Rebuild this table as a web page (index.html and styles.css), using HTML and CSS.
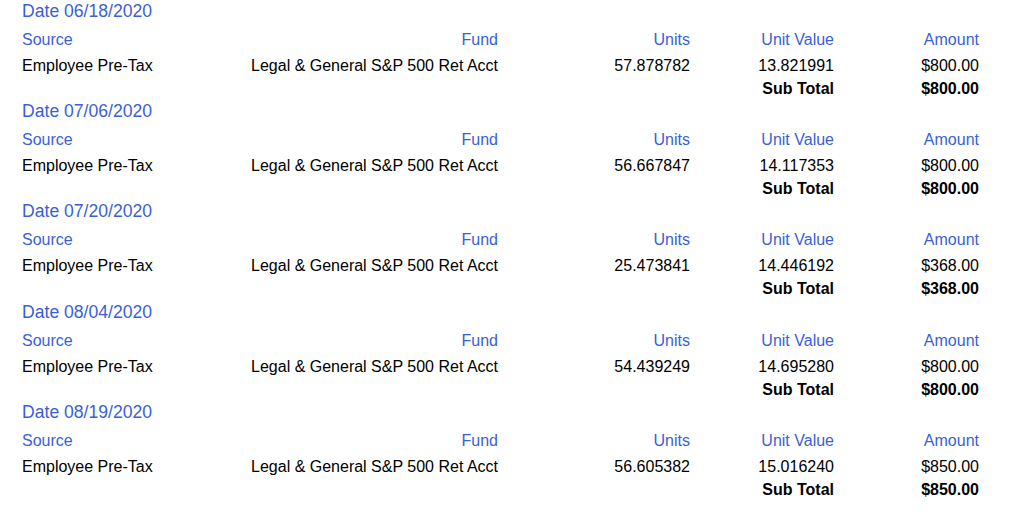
FILE: index.html
```html
<!DOCTYPE html>
<html lang="en">
<head>
<meta charset="utf-8">
<title>Transactions</title>
<link rel="stylesheet" href="styles.css">
</head>
<body>
<div class="list">
  <section class="block">
    <div class="date">Date 06/18/2020</div>
    <div class="grid">
      <div class="hd">Source</div><div class="hd r">Fund</div><div class="hd r">Units</div><div class="hd r">Unit Value</div><div class="hd r">Amount</div>
      <div class="cell">Employee Pre-Tax</div><div class="cell r">Legal &amp; General S&amp;P 500 Ret Acct</div><div class="cell r">57.878782</div><div class="cell r">13.821991</div><div class="cell r">$800.00</div>
      <div class="sub"></div><div class="sub"></div><div class="sub"></div><div class="sub r b">Sub Total</div><div class="sub r b">$800.00</div>
    </div>
  </section>
  <section class="block">
    <div class="date">Date 07/06/2020</div>
    <div class="grid">
      <div class="hd">Source</div><div class="hd r">Fund</div><div class="hd r">Units</div><div class="hd r">Unit Value</div><div class="hd r">Amount</div>
      <div class="cell">Employee Pre-Tax</div><div class="cell r">Legal &amp; General S&amp;P 500 Ret Acct</div><div class="cell r">56.667847</div><div class="cell r">14.117353</div><div class="cell r">$800.00</div>
      <div class="sub"></div><div class="sub"></div><div class="sub"></div><div class="sub r b">Sub Total</div><div class="sub r b">$800.00</div>
    </div>
  </section>
  <section class="block">
    <div class="date">Date 07/20/2020</div>
    <div class="grid">
      <div class="hd">Source</div><div class="hd r">Fund</div><div class="hd r">Units</div><div class="hd r">Unit Value</div><div class="hd r">Amount</div>
      <div class="cell">Employee Pre-Tax</div><div class="cell r">Legal &amp; General S&amp;P 500 Ret Acct</div><div class="cell r">25.473841</div><div class="cell r">14.446192</div><div class="cell r">$368.00</div>
      <div class="sub"></div><div class="sub"></div><div class="sub"></div><div class="sub r b">Sub Total</div><div class="sub r b">$368.00</div>
    </div>
  </section>
  <section class="block">
    <div class="date">Date 08/04/2020</div>
    <div class="grid">
      <div class="hd">Source</div><div class="hd r">Fund</div><div class="hd r">Units</div><div class="hd r">Unit Value</div><div class="hd r">Amount</div>
      <div class="cell">Employee Pre-Tax</div><div class="cell r">Legal &amp; General S&amp;P 500 Ret Acct</div><div class="cell r">54.439249</div><div class="cell r">14.695280</div><div class="cell r">$800.00</div>
      <div class="sub"></div><div class="sub"></div><div class="sub"></div><div class="sub r b">Sub Total</div><div class="sub r b">$800.00</div>
    </div>
  </section>
  <section class="block">
    <div class="date">Date 08/19/2020</div>
    <div class="grid">
      <div class="hd">Source</div><div class="hd r">Fund</div><div class="hd r">Units</div><div class="hd r">Unit Value</div><div class="hd r">Amount</div>
      <div class="cell">Employee Pre-Tax</div><div class="cell r">Legal &amp; General S&amp;P 500 Ret Acct</div><div class="cell r">56.605382</div><div class="cell r">15.016240</div><div class="cell r">$850.00</div>
      <div class="sub"></div><div class="sub"></div><div class="sub"></div><div class="sub r b">Sub Total</div><div class="sub r b">$850.00</div>
    </div>
  </section>
</div>
</body>
</html>
```
FILE: styles.css
```css
html, body {
  margin: 0;
  padding: 0;
  background: #ffffff;
}
body {
  font-family: "Liberation Sans", Arial, Helvetica, sans-serif;
  font-size: 16px;
  color: #000000;
}
.list {
  padding-left: 22px;
  width: 957px;
}
.block {
  height: 100.2px;
}
.date {
  font-size: 17.6px;
  line-height: 23px;
  color: #3a5fd8;
}
.grid {
  display: grid;
  grid-template-columns: 200px 276px 192px 144px 145px;
  margin-top: 5px;
}
.hd {
  color: #3a5fd8;
  line-height: 23px;
}
.cell {
  line-height: 22px;
  padding-top: 4px;
}
.sub {
  line-height: 23px;
}
.r { text-align: right; }
.b { font-weight: bold; }
```
